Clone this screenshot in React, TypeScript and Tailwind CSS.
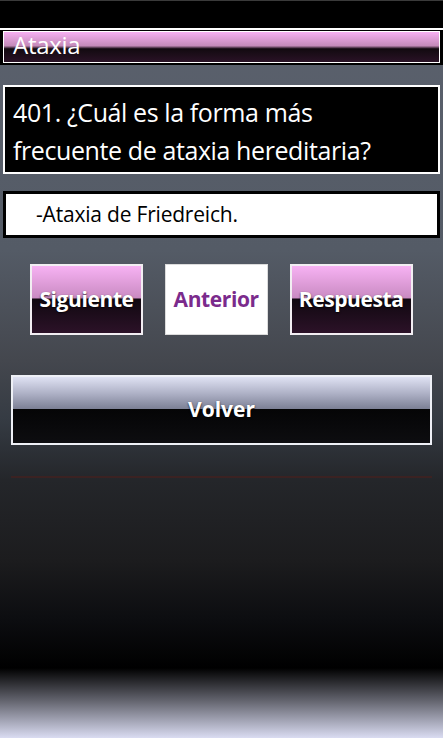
import React from 'react';

const font = { fontFamily: '"Open Sans", "Noto Sans", sans-serif' };

const GlossButton: React.FC<{ label: string }> = ({ label }) => (
  <button
    className="relative h-[71px] px-[7px] border-2 border-[#f2eef2] bg-[linear-gradient(to_bottom,#f7b2f3_0%,#c98ac2_48%,#100810_49%,#2c1228_100%)] text-white text-[21px] font-bold tracking-[-0.4px] [text-shadow:0_1px_2px_rgba(0,0,0,0.8)]"
  >
    {label}
  </button>
);

export default function App() {
  return (
    <div
      className="w-[443px] h-[738px] overflow-hidden flex flex-col bg-[linear-gradient(to_bottom,#5b616d_0px,#545b66_250px,#44474e_360px,#353b43_420px,#24262a_480px,#1c1c1e_560px,#0c0d10_620px,#000_668px,#61626c_700px,#dadcf2_738px)]"
      style={font}
    >
      <div className="h-[28px] bg-black border-t border-[#3a3a3a]" />
      <div className="h-[2px] bg-white" />
      <div className="bg-black pt-[1px] px-[3px] pb-[2px]">
        <div className="h-[32px] border border-white bg-[linear-gradient(to_bottom,#f6b0f2_0%,#c48ab9_46%,#120a10_56%,#2a1226_100%)] flex items-center px-[9px]">
          <span className="text-white text-[24px] leading-none -mt-[4px] tracking-[-0.3px]">Ataxia</span>
        </div>
      </div>

      <div className="h-[20px]" />

      <div className="mx-[3px] border-2 border-white bg-black pl-[8px] pr-[6px] pt-[6px] h-[89px]">
        <p className="text-white text-[25px] leading-[38px] tracking-[-0.4px]">
          401. ¿Cuál es la forma más
          <br />
          frecuente de ataxia hereditaria?
        </p>
      </div>

      <div className="h-[17px]" />

      <div className="mx-[3px] h-[47px] border-[3px] border-black bg-white flex items-center pl-[30px]">
        <span className="text-black text-[21px] tracking-[-0.2px]">-Ataxia de Friedreich.</span>
      </div>

      <div className="h-[26px]" />

      <div className="flex justify-center gap-[22px]">
        <GlossButton label="Siguiente" />
        <button className="h-[71px] px-[8px] border border-[#dcdcdc] bg-white text-[#7b2b8c] text-[21px] font-bold tracking-[-0.4px]">
          Anterior
        </button>
        <GlossButton label="Respuesta" />
      </div>

      <div className="h-[40px]" />

      <button className="mx-[11px] h-[70px] border-2 border-[#eef0f6] bg-[linear-gradient(to_bottom,#dfe2f3_0%,#aeb1c6_25%,#7d8196_48%,#050506_49%,#0d0d10_100%)] text-white text-[21px] font-bold [text-shadow:0_1px_2px_rgba(0,0,0,0.8)]">
        <span className="block -mt-[1px]">Volver</span>
      </button>

      <div className="h-[31px]" />
      <div className="mx-[11px] h-[2px] bg-[#3b2222]" />
    </div>
  );
}
